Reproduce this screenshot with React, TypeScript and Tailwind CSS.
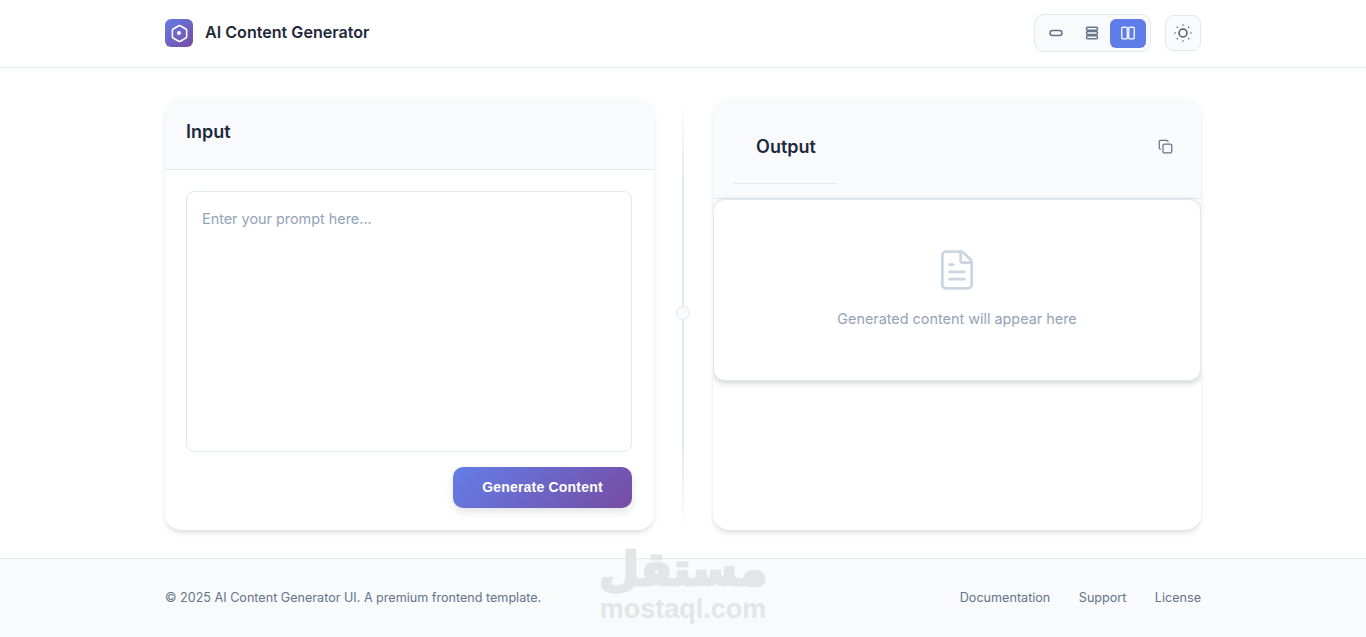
import { Copy, FileText, Hexagon, SunDim } from 'lucide-react';

function SingleIcon() {
  return (
    <svg width="16" height="16" viewBox="0 0 16 16" fill="none" stroke="currentColor" strokeWidth="1.5">
      <rect x="2" y="5.5" width="12" height="5" rx="2.5" />
    </svg>
  );
}

function StackIcon() {
  return (
    <svg width="16" height="16" viewBox="0 0 16 16" fill="none" stroke="currentColor" strokeWidth="1.5">
      <rect x="2.5" y="2.2" width="11" height="3" rx="1.2" />
      <rect x="2.5" y="6.5" width="11" height="3" rx="1.2" />
      <rect x="2.5" y="10.8" width="11" height="3" rx="1.2" />
    </svg>
  );
}

function ColumnsIcon() {
  return (
    <svg width="16" height="16" viewBox="0 0 16 16" fill="none" stroke="currentColor" strokeWidth="1.5">
      <rect x="1.75" y="2.25" width="5.5" height="11.5" rx="0.8" />
      <rect x="8.75" y="2.25" width="5.5" height="11.5" rx="0.8" />
    </svg>
  );
}

const cardShadow = 'shadow-[0_4px_6px_-1px_rgba(0,0,0,0.1),0_2px_4px_-1px_rgba(0,0,0,0.06)]';

export default function App() {
  return (
    <div className="relative flex h-[637px] flex-col overflow-hidden bg-white font-['Inter',sans-serif] text-[#1e293b]">
      {/* Header */}
      <header className="h-[68px] shrink-0 border-b border-[#e2e8f0] pb-px">
        <div className="mx-[165px] flex h-full items-center justify-between">
          <div className="flex items-center gap-3">
            <div className="flex h-7 w-7 items-center justify-center rounded-md bg-[linear-gradient(135deg,#637ee8,#764ba2)]">
              <span className="relative flex items-center justify-center text-white">
                <Hexagon size={19} strokeWidth={2} />
                <span className="absolute h-1 w-1 rounded-full bg-white" />
              </span>
            </div>
            <h1 className="pb-[2px] text-[16.1px] font-semibold">AI Content Generator</h1>
          </div>
          <div className="flex items-center gap-[14px]">
            <div className="flex h-[38px] items-center rounded-[10px] border border-[#e2e8f0] bg-[#f8fafc] pl-[3px] pr-1">
              <button className="flex h-[29px] w-9 items-center justify-center rounded-md text-[#64748b]">
                <SingleIcon />
              </button>
              <button className="flex h-[29px] w-9 items-center justify-center rounded-md text-[#64748b]">
                <StackIcon />
              </button>
              <button className="flex h-[29px] w-9 items-center justify-center rounded-md bg-[#5f7de8] text-[#e6edff]">
                <ColumnsIcon />
              </button>
            </div>
            <button className="flex h-9 w-9 items-center justify-center rounded-lg border border-[#e2e8f0] bg-[#f8fafc] text-[#475569]">
              <SunDim size={24} strokeWidth={1.5} />
            </button>
          </div>
        </div>
      </header>

      {/* Main */}
      <main className="mx-[165px] flex flex-1 pb-[28px] pt-[30px]">
        <section className={`flex w-[489px] flex-col overflow-hidden rounded-2xl bg-white ${cardShadow}`}>
          <div className="flex h-[72px] shrink-0 items-center border-b border-[#e2e8f0] bg-[#f8fafc] px-[21px] pb-[4px]">
            <h2 className="text-lg font-semibold">Input</h2>
          </div>
          <div className="flex flex-1 flex-col pl-[21px] pr-[22px] pt-[21px]">
            <textarea
              placeholder="Enter your prompt here..."
              className="h-[261px] w-full resize-none rounded-lg border border-[#e2e8f0] bg-white p-[15px] text-[14.4px] leading-[24px] outline-none placeholder:text-[#94a3b8]"
            />
            <div className="mt-[15px] flex justify-end">
              <button className="h-[41px] w-[179px] rounded-[10px] bg-[linear-gradient(135deg,#637ee8,#764ba2)] pb-px font-['Liberation_Sans',sans-serif] text-sm font-bold tracking-[0.2px] text-white shadow-[0_4px_8px_rgba(15,23,42,0.12)]">
                Generate Content
              </button>
            </div>
          </div>
        </section>

        {/* Divider */}
        <div className="relative flex w-[59px] shrink-0 items-center justify-center pr-px">
          <div className="h-full w-0.5 bg-[linear-gradient(to_bottom,transparent,#e2e8f0_20%,#e2e8f0_80%,transparent)]" />
          <span className="absolute mb-[2px] h-[14px] w-[14px] rounded-full border border-[#e2e8f0] bg-[#f8fafc]" />
        </div>

        <section className={`flex w-[488px] flex-col overflow-hidden rounded-2xl bg-white ${cardShadow}`}>
          <div className="flex h-[101px] shrink-0 items-start justify-between border-b border-[#e2e8f0] bg-[#f8fafc] pl-5 pr-[28px]">
            <div className="flex h-[86px] w-[104px] items-center justify-center border-b border-[#e2e8f0] pl-[2px] pt-[13px]">
              <h2 className="text-lg font-semibold">Output</h2>
            </div>
            <button className="mt-[41px] text-[#64748b]">
              <Copy size={15} strokeWidth={2} />
            </button>
          </div>
          <div className="flex h-[182px] shrink-0 flex-col items-center rounded-xl border border-[#e2e8f0] bg-white pt-[48px] shadow-[0_2px_6px_rgba(15,23,42,0.2)]">
            <FileText size={44} strokeWidth={1.5} className="text-[#cbd5e1]" />
            <p className="mt-[15px] text-[14.4px] leading-6 text-[#94a3b8]">Generated content will appear here</p>
          </div>
        </section>
      </main>

      {/* Footer */}
      <footer className="h-[79px] shrink-0 border-t border-[#e2e8f0] bg-[#f8fafc]">
        <div className="mx-[165px] flex h-full items-center justify-between text-[12.6px] text-[#64748b]">
          <p>© 2025 AI Content Generator UI. A premium frontend template.</p>
          <nav className="flex gap-[28.5px]">
            <a>Documentation</a>
            <a>Support</a>
            <a>License</a>
          </nav>
        </div>
      </footer>

      {/* Watermark */}
      <div className="pointer-events-none absolute left-[600px] top-[541px] flex w-[166px] flex-col items-center text-[#e4e5e7]">
        <span dir="rtl" className="font-['DejaVu_Sans',sans-serif] text-[46px] leading-[56px] font-bold [-webkit-text-stroke:2.5px_#e4e5e7]">مستقل</span>
        <span className="font-['Liberation_Sans',sans-serif] text-[27px] leading-[24px] font-bold">mostaql.com</span>
      </div>
    </div>
  );
}
